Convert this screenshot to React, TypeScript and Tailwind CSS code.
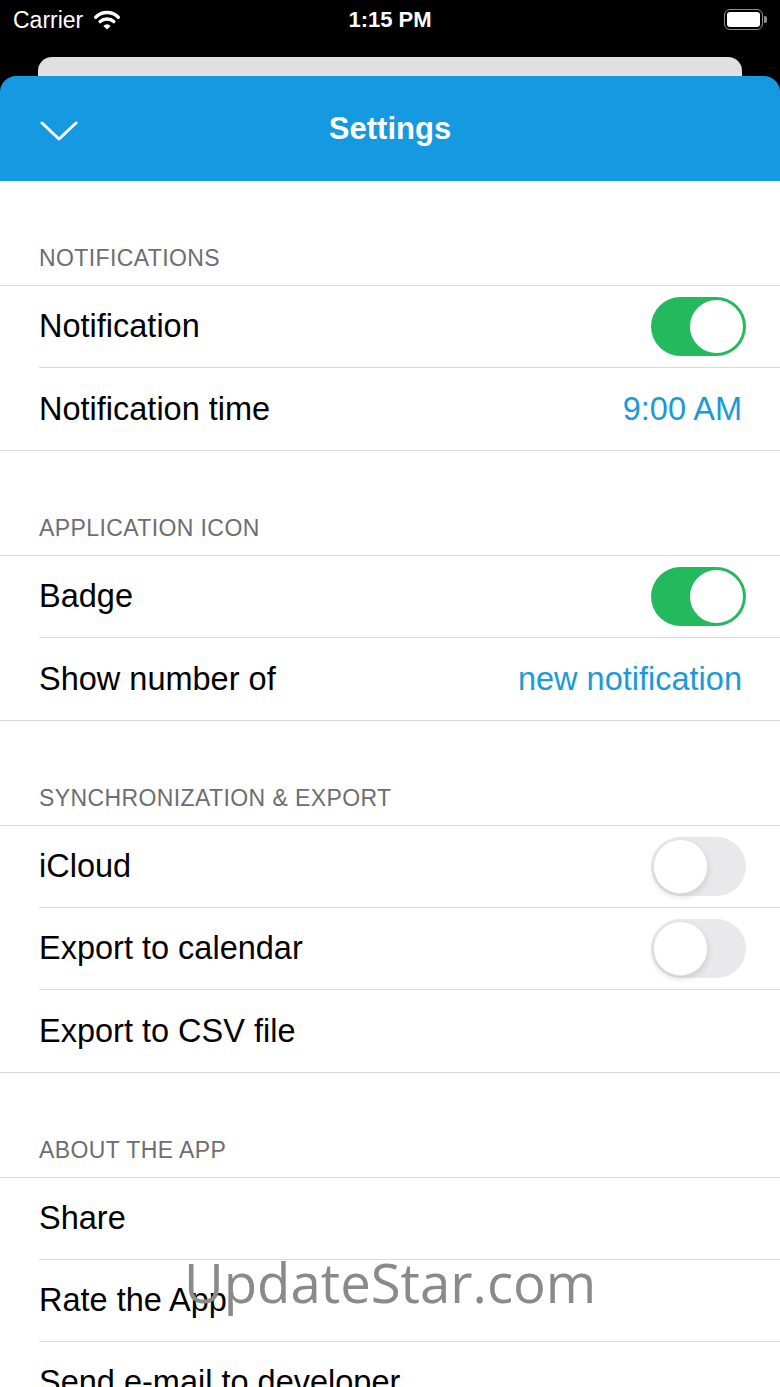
import React from "react";

// ── Small pieces ───────────────────────────────────────────────────────────────

function Wifi() {
  return (
    <svg width="28" height="21" viewBox="0 0 28 21" fill="none">
      <path d="M2.7 7.2 A16 16 0 0 1 25.3 7.2" stroke="white" strokeWidth="3.4" strokeLinecap="round" />
      <path d="M7.2 11.6 A10 10 0 0 1 20.8 11.6" stroke="white" strokeWidth="3.4" strokeLinecap="round" />
      <path d="M14 19.5 L10.4 15.9 A5 5 0 0 1 17.6 15.9 Z" fill="white" />
    </svg>
  );
}

function Battery() {
  return (
    <div className="flex items-center gap-[1px]">
      <div className="w-[39px] h-[21px] rounded-[6px] border-[1.5px] border-[#8e8e8e] p-[2px]">
        <div className="w-full h-full rounded-[3px] bg-white" />
      </div>
      <div className="w-[3px] h-[7px] rounded-r-[2px] bg-[#8e8e8e]" />
    </div>
  );
}

function Toggle({ on }: { on: boolean }) {
  if (on) {
    return (
      <div className="w-[95px] h-[59px] rounded-full bg-[#22ba5c] flex items-center justify-end pr-[3px]">
        <div className="w-[53px] h-[53px] rounded-full bg-white" />
      </div>
    );
  }
  return (
    <div className="w-[95px] h-[59px] rounded-full bg-[#e9e9eb] flex items-center justify-start pl-[2px]">
      <div className="w-[55px] h-[55px] rounded-full bg-white border border-[#e2e2e2] shadow-[0_3px_6px_rgba(0,0,0,0.12)]" />
    </div>
  );
}

type Row = { label: string; toggle?: boolean; value?: string };

function SectionHeader({ title }: { title: string }) {
  return (
    <div className="h-[105px] flex items-end pl-[39px] pb-[14px] border-b border-[#dadadd] text-[23px] leading-[26px] text-[#6d6d72] tracking-[0.4px]">
      {title}
    </div>
  );
}

function Section({ title, rows }: { title: string; rows: Row[] }) {
  return (
    <div>
      <SectionHeader title={title} />
      <div className="border-b border-[#dadadd]">
        {rows.map((r, i) => (
          <div key={i} className="pl-[39px]">
            <div
              className={`h-[82px] flex items-center justify-between ${i < rows.length - 1 ? "border-b border-[#dadadd]" : ""} ${r.toggle !== undefined ? "pr-[34px]" : "pr-[38px]"}`}
            >
              <span className="text-[32.5px] text-black">{r.label}</span>
              {r.toggle !== undefined && <Toggle on={r.toggle} />}
              {r.value && <span className="text-[32.5px] text-[#1b9ad8]">{r.value}</span>}
            </div>
          </div>
        ))}
      </div>
    </div>
  );
}

// ── Main ───────────────────────────────────────────────────────────────────────

export default function App() {
  return (
    <div
      className="relative w-[780px] h-[1387px] overflow-hidden bg-white"
      style={{ fontFamily: '"Liberation Sans", Arial, sans-serif' }}
    >
      {/* Status bar + stacked sheet */}
      <div className="bg-black">
        <div className="h-[57px] flex items-start pt-[6px] px-[13px] text-white">
          <div className="flex-1 flex items-center gap-[10px]">
            <span className="text-[23px] leading-[28px]">Carrier</span>
            <Wifi />
          </div>
          <span className="text-[22px] leading-[28px] font-semibold">1:15 PM</span>
          <div className="flex-1 flex justify-end pt-[3px]">
            <Battery />
          </div>
        </div>
        <div className="mx-[38px] h-[19px] rounded-t-[14px] bg-[#e0e0e0]" />
        <div className="relative h-[105px] rounded-t-[16px] bg-[#1599e0] flex items-center justify-center">
          <svg
            className="absolute left-[40px] top-[44px]"
            width="38" height="22" viewBox="0 0 38 22" fill="none"
          >
            <polyline points="2,3 19,19 36,3" stroke="white" strokeWidth="3" strokeLinecap="round" strokeLinejoin="round" />
          </svg>
          <span className="text-white text-[31px] font-semibold pt-[2px]">Settings</span>
        </div>
      </div>

      <Section
        title="NOTIFICATIONS"
        rows={[
          { label: "Notification", toggle: true },
          { label: "Notification time", value: "9:00 AM" },
        ]}
      />
      <Section
        title="APPLICATION ICON"
        rows={[
          { label: "Badge", toggle: true },
          { label: "Show number of", value: "new notification" },
        ]}
      />
      <Section
        title="SYNCHRONIZATION & EXPORT"
        rows={[
          { label: "iCloud", toggle: false },
          { label: "Export to calendar", toggle: false },
          { label: "Export to CSV file" },
        ]}
      />
      <Section
        title="ABOUT THE APP"
        rows={[
          { label: "Share" },
          { label: "Rate the App" },
          { label: "Send e-mail to developer" },
          { label: "Version" },
        ]}
      />

      {/* Watermark */}
      <div
        className="absolute left-[184px] top-[1248px] text-[54.5px] leading-[68px] text-[#8a8a8a] pointer-events-none"
        style={{ fontFamily: '"Open Sans", "Liberation Sans", sans-serif', fontWeight: 400 }}
      >
        UpdateStar.com
      </div>
    </div>
  );
}
